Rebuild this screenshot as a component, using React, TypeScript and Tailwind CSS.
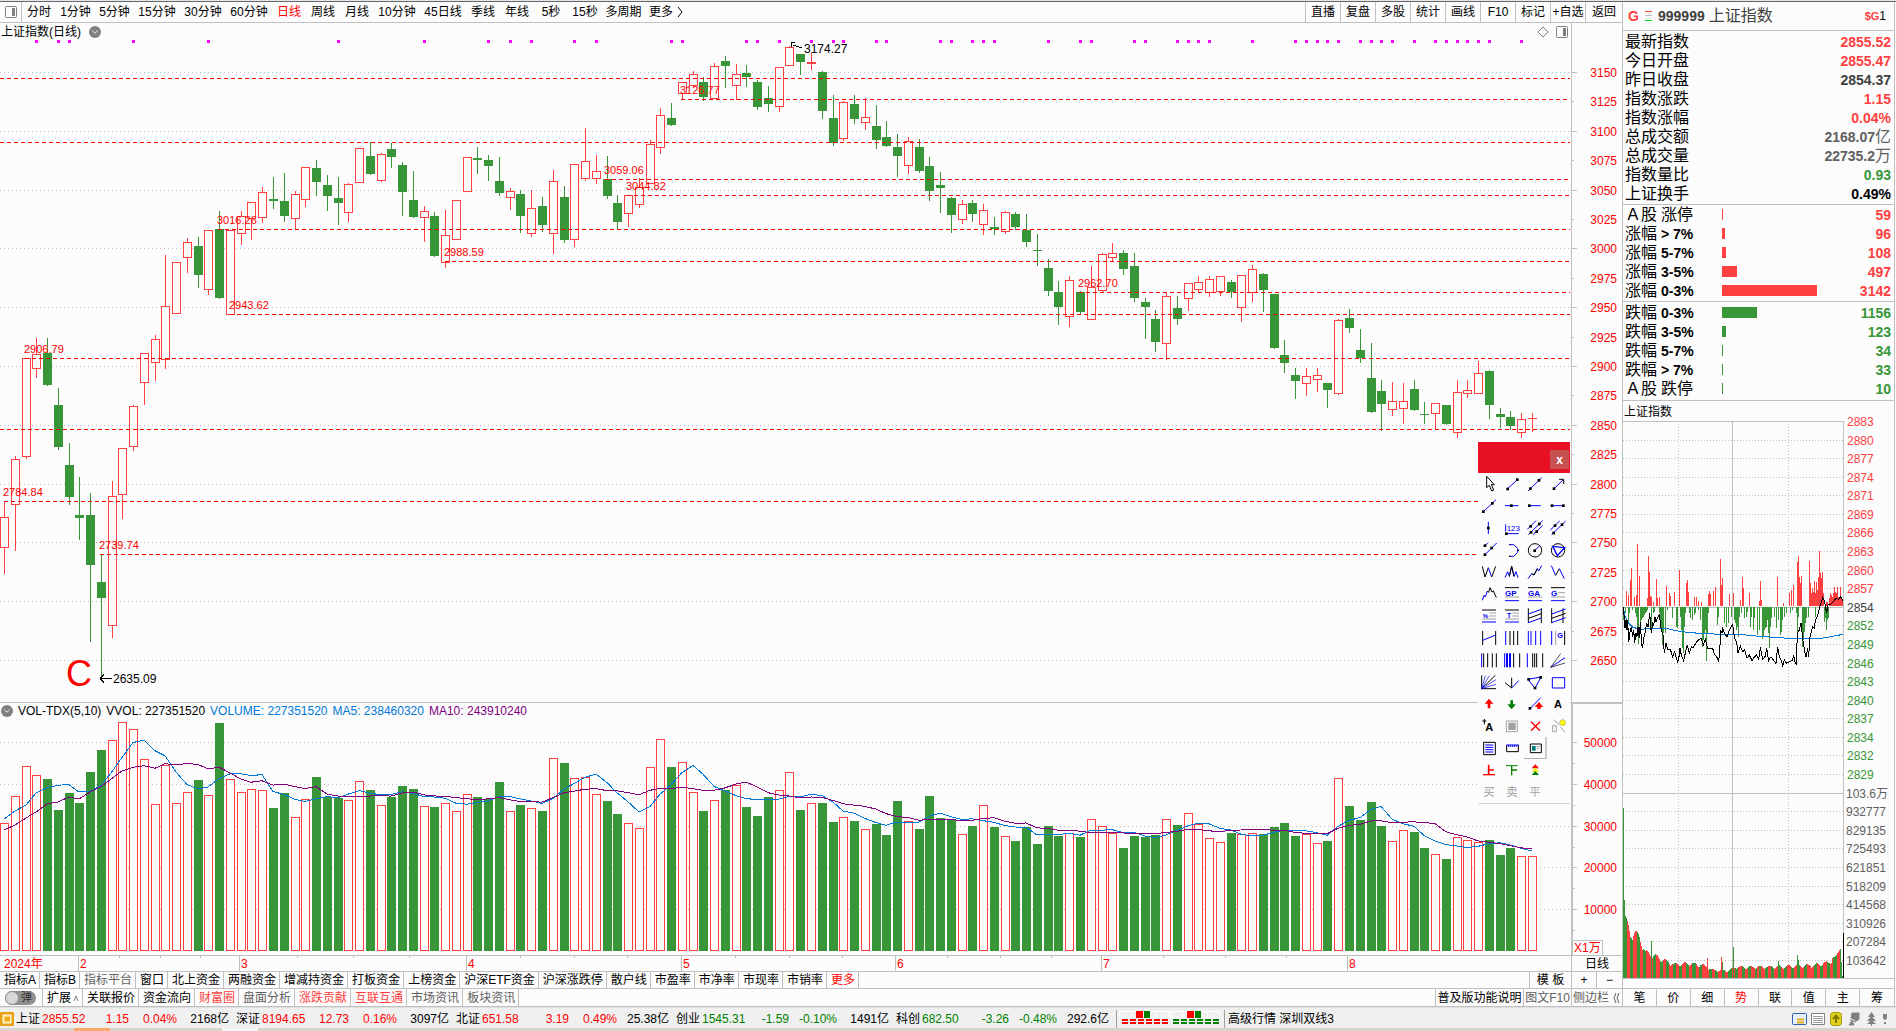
import { useState } from 'react';
import type { ReactNode } from 'react';
import clsx from 'clsx';
import { ChevronDown } from 'lucide-react';

const UP = '#ff4040';
const DOWN = '#389638';
const GRID = '#c0c0c0';
const PAPER = '#fcfcfc';

/** direction, high, body top, body bottom, low, volume top (all in chart units). */
type Bar = ['u' | 'd', number, number, number, number, number];

const BARS: Bar[] = [
  ['u', 501, 517, 547, 573, 823], ['u', 456, 459, 504, 550, 796], ['u', 358, 358, 456, 458, 766],
  ['u', 338, 354, 368, 377, 775], ['d', 338, 353, 385, 385, 779], ['d', 388, 405, 447, 449, 810],
  ['d', 443, 465, 497, 504, 793], ['d', 477, 515, 518, 539, 803], ['d', 493, 515, 565, 641, 772],
  ['d', 555, 582, 598, 677, 750], ['u', 481, 496, 625, 637, 740], ['u', 448, 448, 494, 518, 722],
  ['u', 405, 406, 446, 450, 729], ['u', 353, 353, 382, 404, 759], ['u', 335, 339, 362, 380, 804],
  ['u', 255, 306, 359, 368, 765], ['u', 262, 262, 313, 313, 803], ['u', 238, 242, 257, 272, 792],
  ['d', 237, 246, 275, 287, 780], ['u', 230, 230, 289, 294, 795], ['d', 211, 229, 298, 298, 723],
  ['u', 230, 230, 314, 314, 779], ['u', 211, 216, 233, 244, 792], ['u', 202, 202, 218, 239, 789],
  ['u', 187, 192, 217, 222, 790], ['d', 177, 199, 201, 208, 808], ['d', 173, 201, 216, 221, 793],
  ['u', 191, 194, 218, 228, 817], ['u', 167, 167, 199, 206, 799], ['d', 160, 168, 182, 195, 777],
  ['d', 175, 185, 196, 210, 797], ['d', 177, 198, 203, 224, 798], ['u', 183, 184, 212, 221, 800],
  ['u', 148, 148, 182, 182, 781], ['d', 142, 156, 174, 174, 790], ['u', 153, 154, 180, 181, 805],
  ['d', 143, 149, 157, 167, 797], ['d', 162, 165, 192, 215, 786], ['d', 171, 200, 217, 217, 789],
  ['u', 206, 211, 217, 241, 806], ['d', 212, 216, 256, 256, 807], ['u', 210, 235, 262, 267, 803],
  ['u', 200, 200, 239, 239, 811], ['u', 157, 157, 191, 191, 794], ['d', 147, 158, 160, 173, 797],
  ['d', 155, 160, 166, 180, 799], ['d', 157, 181, 193, 195, 782], ['u', 188, 191, 197, 209, 811],
  ['d', 190, 194, 216, 232, 805], ['u', 190, 208, 233, 236, 808], ['d', 197, 206, 225, 231, 811],
  ['u', 170, 181, 233, 253, 758], ['d', 186, 197, 240, 242, 763], ['u', 164, 164, 239, 246, 778],
  ['u', 128, 161, 178, 180, 777], ['u', 155, 171, 178, 183, 794], ['d', 156, 179, 196, 198, 801],
  ['d', 195, 203, 222, 229, 814], ['u', 195, 195, 213, 226, 823], ['u', 178, 187, 204, 207, 828],
  ['u', 140, 144, 183, 183, 767], ['u', 108, 115, 147, 153, 739], ['d', 103, 118, 125, 125, 767],
  ['u', 82, 82, 93, 99, 762], ['u', 71, 74, 85, 86, 792], ['d', 77, 82, 97, 100, 811],
  ['u', 63, 66, 98, 98, 800], ['d', 56, 61, 66, 87, 790], ['u', 64, 74, 85, 99, 785],
  ['d', 65, 73, 77, 86, 807], ['d', 80, 82, 107, 109, 816], ['d', 86, 98, 104, 111, 797],
  ['u', 67, 67, 106, 111, 790], ['u', 46, 47, 65, 65, 772], ['d', 54, 54, 62, 74, 810],
  ['u', 53, 62, 64, 69, 803], ['d', 71, 72, 111, 118, 803], ['d', 95, 118, 143, 145, 822],
  ['u', 101, 102, 138, 140, 817], ['d', 95, 104, 119, 123, 821], ['u', 98, 117, 122, 129, 829],
  ['d', 105, 126, 140, 148, 824], ['d', 121, 137, 146, 146, 835], ['d', 134, 147, 156, 176, 801],
  ['u', 137, 141, 165, 173, 821], ['d', 139, 147, 171, 172, 829], ['d', 157, 166, 191, 200, 796],
  ['d', 172, 185, 188, 212, 818], ['d', 197, 198, 215, 232, 820], ['u', 200, 204, 219, 223, 834],
  ['d', 200, 203, 214, 221, 826], ['u', 204, 210, 224, 234, 805], ['d', 217, 227, 229, 234, 827],
  ['u', 211, 212, 231, 233, 836], ['d', 212, 214, 227, 229, 841], ['d', 214, 230, 242, 246, 827],
  ['d', 234, 250, 251, 265, 844], ['d', 259, 268, 291, 295, 826], ['d', 281, 292, 307, 324, 836],
  ['u', 276, 280, 316, 326, 833], ['d', 291, 292, 312, 313, 837], ['u', 266, 287, 319, 319, 819],
  ['u', 253, 254, 290, 292, 826], ['u', 243, 253, 257, 260, 833], ['d', 250, 253, 269, 274, 848],
  ['d', 253, 266, 298, 301, 836], ['d', 298, 302, 307, 338, 837], ['d', 310, 319, 342, 351, 835],
  ['u', 292, 296, 343, 359, 819], ['d', 296, 308, 319, 324, 825], ['u', 283, 283, 298, 310, 813],
  ['u', 276, 282, 289, 291, 824], ['u', 276, 279, 292, 296, 838], ['u', 276, 276, 291, 295, 842],
  ['d', 280, 282, 292, 297, 833], ['u', 275, 275, 307, 321, 834], ['u', 265, 269, 292, 301, 833],
  ['d', 273, 274, 290, 311, 834], ['d', 294, 294, 348, 348, 827], ['d', 340, 355, 363, 372, 823],
  ['d', 368, 375, 381, 398, 836], ['u', 368, 376, 383, 395, 834], ['u', 368, 375, 379, 391, 843],
  ['d', 383, 383, 390, 407, 841], ['u', 319, 320, 393, 394, 778], ['d', 309, 318, 328, 332, 806],
  ['d', 329, 350, 358, 362, 820], ['d', 343, 378, 412, 412, 802], ['d', 380, 391, 404, 430, 826],
  ['u', 382, 401, 409, 415, 841], ['u', 383, 401, 408, 423, 830], ['d', 380, 389, 410, 410, 832],
  ['d', 402, 414, 415, 423, 848], ['u', 403, 403, 413, 429, 854], ['d', 405, 405, 424, 424, 859],
  ['u', 380, 392, 432, 437, 837], ['u', 380, 390, 393, 397, 840], ['u', 361, 373, 393, 393, 842],
  ['d', 370, 371, 405, 418, 840], ['d', 408, 414, 417, 427, 855], ['d', 411, 417, 426, 429, 848],
  ['u', 413, 419, 432, 437, 856], ['u', 413, 418, 419, 431, 856],
];

const barX = (i: number) => Math.round(4 + i * 10.76);

/** Bars that carry a magenta signal dot. */
const SIGNALS = [
  3, 5, 6, 12, 19, 31, 39, 45, 47, 49, 53, 55, 62, 63, 69, 70, 72, 75, 77, 78, 81, 82, 87, 88, 90, 91,
  92, 97, 100, 101, 105, 106, 109, 110, 111, 112, 116, 120, 121, 122, 123, 124, 126, 127, 128, 129,
  131, 133, 134, 135, 136, 137, 138, 141,
];

/** y, start x, label */
const LEVELS: [number, number, string?][] = [
  [78, 0], [99, 681, '3126.77'], [142, 0], [179, 605, '3059.06'], [195, 627, '3044.82'],
  [229, 218, '3016.26'], [261, 445, '2988.59'], [292, 1079, '2962.70'], [314, 230, '2943.62'],
  [358, 25, '2906.79'], [429, 0], [501, 4, '2784.84'], [554, 100, '2739.74'],
];

function Candle({ bar, i }: { bar: Bar; i: number }) {
  const [dir, high, top, bottom, low] = bar;
  const x = barX(i);
  const color = dir === 'u' ? UP : DOWN;
  const solid = dir === 'd' || bottom - top < 3;
  return (
    <g>
      <rect x={x} y={high} width={1} height={low - high + 1} fill={color} />
      {solid ? (
        <rect x={x - 4} y={top} width={9} height={Math.max(bottom - top, 1)} fill={color} />
      ) : (
        <rect x={x - 3.5} y={top + 0.5} width={8} height={bottom - top} fill={PAPER} stroke={color} />
      )}
    </g>
  );
}

function PriceChart() {
  const axis = Array.from({ length: 21 }, (_, i) => ({
    value: 3150 - i * 25,
    y: Math.round(72 + i * 29.4),
    major: i % 2 === 0,
  }));
  return (
    <svg viewBox="0 40 1622 662" className="block h-auto w-full" shapeRendering="crispEdges">
      {axis.map((a) => (
        <g key={a.value}>
          {a.major && (
            <line x1={0} x2={1570} y1={a.y + 0.5} y2={a.y + 0.5} stroke={GRID} strokeDasharray="1 3" />
          )}
          <rect x={1571} y={a.y} width={a.major ? 6 : 3} height={1} fill={GRID} />
          <text x={1617} y={a.y + 5} textAnchor="end" fontSize={12} fill="#f00">
            {a.value}
          </text>
        </g>
      ))}
      <rect x={1571} y={40} width={1} height={662} fill={GRID} />
      {SIGNALS.map((i) => (
        <rect key={i} x={barX(i) - 1} y={40} width={3} height={3} fill="#f0f" />
      ))}
      {BARS.map((bar, i) => (
        <Candle key={i} bar={bar} i={i} />
      ))}
      {LEVELS.map(([y, x, label]) => (
        <g key={y}>
          <line x1={x} x2={1570} y1={y + 0.5} y2={y + 0.5} stroke="#f00" strokeDasharray="4 3" />
          {label && (
            <text x={x - 1} y={y - 5} fontSize={11} fill="#f00">
              {label}
            </text>
          )}
        </g>
      ))}
      <path d="M791 47V42.500h4M793 45.500h3M796 46.500h3M799 47.500h3" fill="none" stroke="#000" />
      <text x={804} y={53} fontSize={12}>
        3174.27
      </text>
      <path d="M100 678.5h12M100 678.5l4-4M100 678.5l4 4" fill="none" stroke="#000" />
      <text x={113} y={683} fontSize={12}>
        2635.09
      </text>
      <text x={66} y={686} fontSize={36} fill="#f00">
        C
      </text>
    </svg>
  );
}

/** Rolling mean of the volume tops; `lead` fills the bars before the window is full. */
function movingAverage(span: number, lead: number[]) {
  return BARS.map((_, i) => {
    const y =
      i < lead.length
        ? lead[i]
        : BARS.slice(i - span + 1, i + 1).reduce((sum, b) => sum + b[5], 0) / span;
    return `${barX(i)},${y}`;
  }).join(' ');
}

function VolumeChart() {
  const ma5 = movingAverage(5, [819, 811, 805, 793]);
  const ma10 = movingAverage(10, [830, 825, 818, 812, 804, 802, 797, 799, 792]);
  return (
    <svg viewBox="0 719 1622 236" className="block h-auto w-full" shapeRendering="crispEdges">
      {[50000, 40000, 30000, 20000, 10000].map((v, i) => {
        const y = Math.round(742 + i * 41.8);
        return (
          <g key={v}>
            <line x1={0} x2={1570} y1={y + 0.5} y2={y + 0.5} stroke={GRID} strokeDasharray="1 3" />
            <rect x={1573} y={y} width={4} height={1} fill={GRID} />
            <rect x={1573} y={y + 21} width={2} height={1} fill={GRID} />
            <text x={1617} y={y + 5} textAnchor="end" fontSize={12} fill="#f00">
              {v}
            </text>
          </g>
        );
      })}
      {BARS.map(([dir, , , , , top], i) =>
        dir === 'd' ? (
          <rect key={i} x={barX(i) - 4} y={top} width={9} height={951 - top} fill={DOWN} />
        ) : (
          <rect key={i} x={barX(i) - 3.5} y={top + 0.5} width={8} height={950 - top} fill={PAPER} stroke={UP} />
        ),
      )}
      <polyline points={ma5} fill="none" stroke="#0078d7" />
      <polyline points={ma10} fill="none" stroke="#800080" />
      <rect x={1571} y={719} width={2} height={236} fill={GRID} />
      <rect x={1573} y={940} width={29} height={1} fill={GRID} />
      <rect x={1602} y={940} width={1} height={15} fill={GRID} />
      <text x={1574} y={952} fontSize={12} fill="#f00">
        X1万
      </text>
    </svg>
  );
}

const MONTHS: [number, string][] = [
  [79, '2'], [240, '3'], [467, '4'], [682, '5'], [896, '6'], [1102, '7'], [1348, '8'],
];
const WEEKS = [119, 160, 200, 297, 353, 409, 520, 574, 627, 735, 789, 842, 947, 1000, 1051, 1163, 1225, 1286];

function DateAxis() {
  return (
    <svg viewBox="0 0 1571 15" className="block h-auto min-w-0 flex-1" shapeRendering="crispEdges">
      <text x={4} y={12} fontSize={12} fill="#f00">
        2024年
      </text>
      {MONTHS.map(([x, m]) => (
        <g key={m}>
          <rect x={x - 1} y={0} width={1} height={15} fill={GRID} />
          <text x={x + 1} y={12} fontSize={12} fill="#f00">
            {m}
          </text>
        </g>
      ))}
      {WEEKS.map((x) => (
        <rect key={x} x={x} y={0} width={1} height={2} fill={GRID} />
      ))}
    </svg>
  );
}

/* ---- drawing tools palette; every glyph sits on a 69 x 66 grid ---- */

const K = '#000';
const B = '#00f';
const G = '#a0a0a0';

function Line({ d, c = B, w = 3 }: { d: string; c?: string; w?: number }) {
  return <path d={d} fill="none" stroke={c} strokeWidth={w} />;
}

function Dots({ at }: { at: [number, number][] }) {
  return (
    <>
      {at.map(([x, y]) => (
        <rect key={`${x}-${y}`} x={x - 4} y={y - 4} width={8} height={8} fill={K} />
      ))}
    </>
  );
}

function Glyph({ x, y, size = 24, c = B, bold, children }: {
  x: number;
  y: number;
  size?: number;
  c?: string;
  bold?: boolean;
  children: string;
}) {
  return (
    <text x={x} y={y} fontSize={size} fill={c} fontWeight={bold ? 700 : 400}>
      {children}
    </text>
  );
}

function Banded({ label }: { label: string }) {
  return (
    <>
      <Line d="M12 14H54" c={K} />
      <Glyph x={12} y={38} size={24} bold>{label}</Glyph>
      {label.length === 1 && <Line d="M34 29H54" c={G} />}
      <Line d="M12 42H54" c={G} />
      <Line d="M12 53H54" />
    </>
  );
}

const TOOLS: [string, ReactNode][] = [
  ['选择', <path d="M26 10V44L34 37L41 54L47 51L40 35H49Z" fill="#fff" stroke={K} strokeWidth={3} />],
  ['线段', <><Line d="M18 49L50 19" /><Dots at={[[20, 48], [49, 20]]} /></>],
  ['直线', <><Line d="M12 54L53 14" /><Dots at={[[19, 47], [45, 22]]} /></>],
  ['箭头', <><Line d="M19 49L49 20" /><Line d="M36 19H50V33" c={K} /><Dots at={[[21, 47]]} /></>],
  ['射线', <><Line d="M12 54L54 14" /><Dots at={[[16, 50], [43, 25]]} /></>],
  ['水平直线', <><Line d="M12 32H52" /><Dots at={[[31, 32]]} /></>],
  ['水平射线', <><Line d="M12 32H50" /><Dots at={[[16, 32]]} /></>],
  ['水平线段', <><Line d="M12 32H53" /><Dots at={[[15, 32], [49, 32]]} /></>],
  ['垂直线', <><Line d="M31 14V51" /><Dots at={[[31, 33]]} /></>],
  ['价格标注', <><Line d="M14 22V43" /><Glyph x={17} y={43} size={24}>123</Glyph><Line d="M16 50H53" /><Dots at={[[16, 50]]} /></>],
  ['平行线', <><Line d="M10 37L36 11M13 53L56 11M27 53L56 26" /><Dots at={[[20, 28], [46, 21], [21, 46], [38, 44]]} /></>],
  ['平行通道', <><Line d="M10 39L38 12M14 53L56 12" /><Dots at={[[24, 26], [45, 23], [20, 48]]} /></>],
  ['平行射线', <><Line d="M19 22L30 11M19 49L56 12" /><Dots at={[[21, 20], [21, 47], [41, 27]]} /></>],
  ['圆弧', <><Line d="M25 17H38L50 28V40L38 52H24" /><Line d="M25 17h3M50 34h4M24 52h4" c={K} w={4} /></>],
  ['圆', <><circle cx={33} cy={34} r={20} fill="none" stroke={K} strokeWidth={3} /><Line d="M33 34L47 20" /><Dots at={[[32, 35]]} /></>],
  ['外接圆', <><circle cx={33} cy={34} r={20} fill="none" stroke={K} strokeWidth={3} /><Line d="M17 22L53 26L31 50Z" w={4} /></>],
  ['W底', <><Line d="M13 16L21 48L31 20" c={K} /><Line d="M31 20L41 48" /><Line d="M41 48L53 16" c={K} /></>],
  ['头肩顶', <><Line d="M12 50L20 32L25 46L32 16L39 46L45 32L51 50" /><Line d="M25 46L32 16L39 46" c={K} /></>],
  ['上升浪', <><Line d="M12 53L23 38L30 42L40 23L44 30L53 14" /><Line d="M23 38L30 42L40 23" c={K} /></>],
  ['下降浪', <><Line d="M13 14L26 43" /><Line d="M26 43L37 23" c={K} /><Line d="M37 23L52 53" /></>],
  ['八浪线', <><Line d="M13 52L18 37L22 42L28 24" /><Line d="M28 24L32 28L36 14L42 27L46 24L55 44" c={K} /></>],
  ['黄金价位', <Banded label="GP" />],
  ['黄金目标', <Banded label="GA" />],
  ['黄金分割', <Banded label="G" />],
  ['百分比线', <><Line d="M12 15H54" c={K} /><Glyph x={14} y={38} size={18} bold>%</Glyph><Line d="M34 24H54M34 33H54M12 42H54" c={G} /><Line d="M12 51H54" /></>],
  ['波段线', <><Line d="M12 15H54" c={K} /><Glyph x={18} y={38} size={20} bold>T</Glyph><Line d="M34 24H54M34 33H54M12 42H54" c={G} /><Line d="M12 51H54" /></>],
  ['线性回归带', <><Line d="M13 10V54M52 10V54" c={K} /><Line d="M13 27L52 13M13 53L52 39" /><Line d="M13 40L52 26" c={K} /></>],
  ['延长回归带', <><Line d="M14 10V54M48 10V54" c={K} /><Line d="M14 27L56 12M14 53L56 38" /><Line d="M14 40L56 25" c={K} /></>],
  ['回归线', <><Line d="M14 12V54M53 12V54" c={K} /><Line d="M14 40L53 24" /></>],
  ['周期线', <><Line d="M14 12V54" /><Line d="M27 12V54M38 12V54M50 12V54" c={K} /></>],
  ['费氏周期', <Line d="M13 12V54M21 12V54M35 12V54M50 12V54" />],
  ['对称周期', <><Line d="M14 12V54" /><Line d="M26 12V54" c={G} /><Glyph x={31} y={34} size={22} bold>G</Glyph><Line d="M53 12V54" c={K} /></>],
  ['等距线', <><Line d="M11 13V55" /><Line d="M17 13V55M29 13V55M43 13V55M55 13V55" c={K} /></>],
  ['密集线', <><Line d="M11 13V55" /><Line d="M18 13V55M27 13V55" w={6} /><Line d="M38 13V55M56 13V55" c={K} /></>],
  ['组合线', <><Line d="M10 13V55" /><Line d="M26 13V55M32 13V55M38 13V55M56 13V55" c={K} /></>],
  ['阻速线', <><Line d="M11 55L54 26" /><Line d="M11 55L41 14M11 55L54 42" c={K} w={2} /></>],
  ['江恩角度', <><Line d="M11 13V53H54M11 53L52 13" c={K} /><Line d="M11 53L22 14M11 53L34 14M11 53L54 26M11 53L54 40" w={2} /></>],
  ['矩形角', <><Line d="M12 35L32 51V20" c={K} /><Line d="M32 51L53 29" /></>],
  ['三角形', <><Line d="M12 25L51 18L33 52Z" /><Dots at={[[14, 25], [50, 19], [33, 51]]} /></>],
  ['矩形', <Line d="M16 20H53V51H16Z" />],
  ['涨标记', <path d="M33 17L46 32H37V46H29V32H20Z" fill="#f00" />],
  ['跌标记', <path d="M32 49L45 34H36V22H28V34H19Z" fill="green" />],
  ['线标记', <><Line d="M15 50L50 14" /><Dots at={[[18, 46]]} /><path d="M45 27L58 42H50V48H40V42H32Z" fill="#f00" /></>],
  ['文字', <Glyph x={21} y={46} size={33} c={K} bold>A</Glyph>],
  ['文字注释', <><Line d="M13 18H25M19 12V28" c={K} /><Glyph x={22} y={48} size={33} c={K} bold>A</Glyph></>],
  ['全部隐藏', <><Line d="M16 18H49V50H16Z" c={G} /><rect x={22} y={23} width={22} height={22} fill={G} /></>],
  ['删除', <Line d="M21 20L48 47M48 20L21 47" c="#f00" w={4} />],
  ['属性', <><Line d="M17 32H28V50H17ZM20 14L38 30M40 36L54 52" c={G} /><circle cx={47} cy={23} r={9} fill="#ff0" stroke={G} strokeWidth={2} /></>],
  ['画线管理', <><Line d="M17 16H52V53H17Z" c={K} /><Line d="M22 24H46M22 31H46M22 38H46M22 45H46" /></>],
  ['标尺', <><Line d="M17 24V44H52V24" c={K} /><Line d="M16 24H54M22 24V30M28 24V30M34 24V30M40 24V30M46 24V30" /></>],
  ['截图', <><Line d="M19 21H52V47H19Z" c={K} /><rect x={24} y={27} width={11} height={14} fill="#008080" /><Line d="M38 29H48M38 35H44" c={G} /><Line d="M66 0V65H0" c={G} /></>],
  ['__empty1', null],
  ['上', <><Line d="M32 17V47M32 33H48" c="#f00" w={5} /><Line d="M15 47H51" c="#f00" w={4} /></>],
  ['下', <><Line d="M15 20H50" c="green" w={3} /><Line d="M32 20V49M32 33H48" c="green" w={4} /></>],
  ['信号', <><path d="M34 16L45 28H23Z" fill="#f00" /><path d="M34 26L45 38H23Z" fill="#ee0" /><path d="M34 36L45 48H23Z" fill="green" /></>],
  ['__empty2', null],
  ['买', <Glyph x={16} y={45} size={34} c={G}>买</Glyph>],
  ['卖', <Glyph x={16} y={45} size={34} c={G}>卖</Glyph>],
  ['平', <Glyph x={16} y={45} size={34} c={G}>平</Glyph>],
];

function DrawingPalette({ onClose }: { onClose: () => void }) {
  return (
    <div className="absolute right-[52px] top-[419px] w-[92px] border-b border-gray-300 bg-[#fcfcfc]">
      <div className="flex h-[31px] items-center justify-end bg-[#e81123] pr-px pt-1">
        <button
          type="button"
          aria-label="关闭"
          onClick={onClose}
          className="flex size-[19px] items-center justify-center bg-[#c75050] text-xs font-bold leading-none text-white"
        >
          x
        </button>
      </div>
      <div className="grid grid-cols-4">
        {TOOLS.map(([name, art]) =>
          art ? (
            <button key={name} type="button" aria-label={name} className="h-[22px] w-[23px]">
              <svg viewBox="0 0 69 66" className="block h-[22px] w-[23px]">
                {art}
              </svg>
            </button>
          ) : (
            <span key={name} />
          ),
        )}
      </div>
    </div>
  );
}

/* ---- toolbars ---- */

const PERIODS: [string, string][] = [
  ['分时', 'w-[34px]'], ['1分钟', 'w-[39px]'], ['5分钟', 'w-[39px]'], ['15分钟', 'w-[46px]'],
  ['30分钟', 'w-[46px]'], ['60分钟', 'w-[46px]'], ['日线', 'w-[34px]'], ['周线', 'w-[34px]'],
  ['月线', 'w-[34px]'], ['10分钟', 'w-[46px]'], ['45日线', 'w-[46px]'], ['季线', 'w-[34px]'],
  ['年线', 'w-[34px]'], ['5秒', 'w-[34px]'], ['15秒', 'w-[34px]'], ['多周期', 'w-[43px]'],
];
const ACTIONS = ['直播', '复盘', '多股', '统计', '画线', 'F10', '标记', '+自选'];

function PaneIcon() {
  return (
    <svg viewBox="0 0 12 12" className="size-3 shrink-0">
      <rect x={0.5} y={0.5} width={11} height={11} rx={1} fill="none" stroke="#808080" />
      <rect x={7} y={2} width={3} height={8} fill="#808080" />
    </svg>
  );
}

function TopBar() {
  const [period, setPeriod] = useState('日线');
  return (
    <div className="flex h-[21px] items-stretch border-b border-[#c0c0c0]">
      <button type="button" aria-label="侧栏" className="flex w-[22px] items-center justify-center border-r border-[#c0c0c0]">
        <PaneIcon />
      </button>
      {PERIODS.map(([name, width]) => (
        <button
          key={name}
          type="button"
          onClick={() => setPeriod(name)}
          className={clsx('shrink-0 whitespace-nowrap text-center', width, period === name && 'text-[#f00]')}
        >
          {name}
        </button>
      ))}
      <button type="button" className="flex items-center gap-1 whitespace-nowrap pl-1">
        更多
        <svg viewBox="0 0 6 10" className="h-2.5 w-1.5">
          <path d="M1 0L5 5L1 10" fill="none" stroke="#000" />
        </svg>
      </button>
      <span className="flex-1" />
      {ACTIONS.map((name) => (
        <button key={name} type="button" className="w-[35px] shrink-0 whitespace-nowrap border-l border-[#c0c0c0] text-center">
          {name}
        </button>
      ))}
      <button type="button" className="w-[37px] shrink-0 border-l border-[#c0c0c0]">
        返回
      </button>
    </div>
  );
}

function Bullet() {
  return (
    <span className="flex size-3 shrink-0 items-center justify-center rounded-full bg-[#808080] text-white">
      <ChevronDown size={10} />
    </span>
  );
}

const INDICATORS = [
  '指标A', '指标B', '指标平台', '窗口', '北上资金', '两融资金', '增减持资金', '打板资金', '上榜资金',
  '沪深ETF资金', '沪深涨跌停', '散户线', '市盈率', '市净率', '市现率', '市销率', '更多',
];
const LINKS: [string, string][] = [
  ['关联报价', ''], ['资金流向', ''], ['财富圈', 'text-[#ff4040]'], ['盘面分析', 'text-[#606060]'],
  ['涨跌贡献', 'text-[#ff4040]'], ['互联互通', 'text-[#ff4040]'], ['市场资讯', 'text-[#606060]'],
  ['板块资讯', 'text-[#606060]'],
];
const CELL = 'shrink-0 whitespace-nowrap border-r border-[#c0c0c0] pl-1 pr-[3px] text-center';

function BottomBars() {
  return (
    <>
      <div className="flex h-[17px] border-t border-[#c0c0c0] leading-4">
        {INDICATORS.map((name) => (
          <button
            key={name}
            type="button"
            className={clsx(CELL, name === '更多' && 'text-[#f00]', name === '指标平台' && 'text-[#606060]')}
          >
            {name}
          </button>
        ))}
        <span className="flex-1" />
        <button type="button" className="w-[42px] border-l border-[#c0c0c0]">模 板</button>
        <button type="button" className="w-[25px] border-l border-[#c0c0c0]">+</button>
        <button type="button" className="w-[26px] border-l border-[#c0c0c0]">−</button>
      </div>
      <div className="flex h-[18px] border-t border-[#c0c0c0] leading-4">
        <label className="flex w-[43px] items-center border-r border-[#c0c0c0] pl-[5px]">
          <input type="checkbox" className="peer sr-only" />
          <span className="flex h-[14px] w-[31px] items-center rounded-full bg-[#909090] text-[11px] leading-none text-[#333]">
            <span className="mr-0.5 size-3.5 rounded-full border border-[#909090] bg-[#d8d8d8]" />弹
          </span>
        </label>
        <button type="button" className={clsx(CELL, 'flex items-center gap-0.5')}>
          扩展
          <svg viewBox="0 0 6 6" className="size-1.5">
            <path d="M1 6L3 1L5 6" fill="none" stroke="#808080" />
          </svg>
        </button>
        {LINKS.map(([name, tone]) => (
          <button key={name} type="button" className={clsx(CELL, tone)}>
            {name}
          </button>
        ))}
        <span className="flex-1" />
        <button type="button" className="w-[88px] whitespace-nowrap border-l border-[#c0c0c0]">普及版功能说明</button>
        <button type="button" className="w-12 whitespace-nowrap border-l border-[#c0c0c0] text-[#606060]">图文F10</button>
        <button type="button" className="flex w-[51px] items-center gap-1 whitespace-nowrap border-l border-[#c0c0c0] pl-px text-[#606060]">
          侧边栏
          <svg viewBox="0 0 7 10" className="h-2.5 w-[7px]">
            <path d="M3 0L1 5L3 10M6 0L4 5L6 10" fill="none" stroke="#606060" />
          </svg>
        </button>
      </div>
    </>
  );
}

/* ---- quote panel ---- */

const QUOTES: [string, string, string, string?][] = [
  ['最新指数', '2855.52', 'text-[#ff4040]'],
  ['今日开盘', '2855.47', 'text-[#ff4040]'],
  ['昨日收盘', '2854.37', 'text-[#404040]'],
  ['指数涨跌', '1.15', 'text-[#ff4040]'],
  ['指数涨幅', '0.04%', 'text-[#ff4040]'],
  ['总成交额', '2168.07', 'text-[#606060]', '亿'],
  ['总成交量', '22735.2', 'text-[#606060]', '万'],
  ['指数量比', '0.93', 'text-[#389638]'],
  ['上证换手', '0.49%', 'text-black'],
];

const GAINERS: [string, string, number, number][] = [
  ['Ａ股', '涨停', 59, 1], ['涨幅', '> 7%', 96, 3], ['涨幅', '5-7%', 108, 4], ['涨幅', '3-5%', 497, 15], ['涨幅', '0-3%', 3142, 95],
];
const LOSERS: [string, string, number, number][] = [
  ['跌幅', '0-3%', 1156, 35], ['跌幅', '3-5%', 123, 4], ['跌幅', '5-7%', 34, 1], ['跌幅', '> 7%', 33, 1], ['Ａ股', '跌停', 10, 1],
];

function Breadth({ rows, down }: { rows: [string, string, number, number][]; down?: boolean }) {
  return (
    <table className="w-full border-separate border-spacing-0 leading-none">
      <tbody>
        {rows.map(([kind, range, count, width]) => (
          <tr key={kind + range} className="h-[19px]">
            <th scope="row" className="w-[99px] whitespace-nowrap p-0 pl-0.5 text-left text-base font-normal leading-none">
              {kind}
              <span className={clsx('ml-1', /\d/.test(range) && 'text-sm font-bold leading-none')}>{range}</span>
            </th>
            <td className="p-0">
              <div className={clsx('h-[11px]', down ? 'bg-[#389638]' : 'bg-[#ff4040]')} style={{ width }} />
            </td>
            <td className={clsx('p-0 pr-[3px] text-right text-sm font-bold leading-none', down ? 'text-[#389638]' : 'text-[#ff4040]')}>
              {count}
            </td>
          </tr>
        ))}
      </tbody>
    </table>
  );
}

/* Intraday samples are kept at a third of a pixel. */
const tx = (v: number) => 1616 + v / 3;
const ty = (v: number) => 400 + v / 3;
const trace = (pts: number[]) => {
  const out: string[] = [];
  for (let i = 0; i < pts.length; i += 2) out.push(`${tx(pts[i])},${ty(pts[i + 1])}`);
  return out.join(' ');
};

const TICKS = [
  22, 620, 27, 685, 30, 660, 33, 690, 35, 660, 38, 727, 42, 695, 46, 680, 50, 712, 53, 690, 56, 728, 60, 700,
  63, 710, 66, 680, 70, 715, 73, 665, 76, 720, 79, 745, 84, 710, 88, 695, 92, 668, 96, 680, 101, 640, 106, 700,
  110, 670, 113, 675, 117, 650, 120, 665, 124, 655, 130, 645, 136, 690, 141, 705, 145, 760, 150, 730, 156, 750,
  163, 748, 170, 770, 176, 755, 180, 770, 185, 788, 190, 765, 192, 745, 196, 765, 203, 782, 210, 750, 214, 735,
  220, 760, 226, 740, 232, 742, 240, 728, 248, 720, 256, 715, 262, 735, 268, 718, 275, 745, 290, 745, 295, 762,
  303, 772, 308, 783, 311, 760, 314, 690, 318, 700, 320, 682, 325, 700, 333, 710, 340, 690, 345, 680, 350, 675,
  356, 715, 362, 728, 366, 760, 373, 738, 380, 755, 386, 750, 393, 775, 400, 765, 408, 782, 416, 770, 422, 765,
  428, 778, 433, 742, 440, 778, 447, 770, 452, 745, 458, 782, 465, 770, 472, 780, 480, 790, 485, 740, 490, 770,
  497, 785, 500, 800, 505, 780, 512, 790, 520, 785, 530, 780, 533, 765, 536, 785, 541, 795, 544, 700, 550, 690,
  555, 670, 562, 730, 567, 760, 570, 770, 575, 745, 578, 770, 582, 710, 590, 680, 595, 685, 598, 660, 604, 650,
  610, 625, 615, 610, 620, 592, 626, 605, 632, 640, 636, 615, 645, 612, 652, 605, 660, 595, 668, 598, 674, 590,
  680, 602,
];
const AVERAGE = [
  22, 620, 26, 645, 38, 670, 50, 682, 75, 688, 110, 684, 145, 684, 195, 695, 260, 701, 390, 705, 430, 709,
  520, 715, 615, 715, 650, 709, 681, 703,
];
const RISES = [
  31, 573, 38, 585, 43, 540, 46, 504, 55, 590, 61, 585, 64, 432, 70, 528, 94, 594, 97, 468, 100, 515, 103, 588,
  107, 590, 113, 605, 121, 537, 124, 593, 130, 590, 152, 558, 160, 580, 163, 588, 175, 575, 190, 510, 211, 550,
  214, 540, 217, 575, 235, 590, 241, 590, 248, 603, 255, 605, 277, 582, 280, 573, 284, 582, 292, 573, 298, 560,
  313, 477, 317, 555, 320, 533, 341, 583, 352, 578, 374, 600, 380, 530, 383, 565, 400, 580, 431, 603, 433, 543,
  436, 600, 484, 530, 502, 608, 520, 580, 526, 570, 532, 555, 545, 485, 548, 468, 551, 530, 554, 550, 557, 528,
  581, 483, 584, 550, 587, 580, 590, 563, 593, 575, 596, 543, 599, 580, 602, 545, 605, 570, 608, 530, 611, 453,
  614, 520, 617, 533, 620, 516, 623, 580, 632, 605, 635, 605, 640, 595, 644, 580, 647, 585, 650, 590, 653, 580,
  656, 560, 659, 575, 662, 580, 665, 560, 668, 590, 671, 595, 674, 560, 677, 590, 680, 600,
];
const FALLS = [
  23, 660, 29, 640, 38, 670, 41, 640, 50, 630, 58, 640, 61, 650, 64, 700, 68, 732, 73, 690, 76, 660, 79, 655,
  82, 650, 85, 645, 88, 640, 91, 635, 94, 630, 106, 690, 112, 640, 115, 635, 130, 640, 134, 680, 137, 690,
  140, 735, 143, 700, 149, 698, 155, 630, 170, 655, 181, 680, 184, 685, 193, 650, 196, 690, 199, 745, 202, 758,
  205, 680, 208, 640, 220, 640, 223, 655, 229, 660, 235, 645, 238, 640, 247, 630, 253, 660, 259, 740, 262, 720,
  265, 700, 268, 690, 271, 783, 274, 700, 277, 640, 305, 675, 308, 650, 325, 670, 331, 680, 337, 670, 346, 650,
  355, 660, 358, 670, 361, 690, 364, 680, 367, 712, 370, 650, 376, 640, 385, 655, 390, 650, 393, 635, 403, 680,
  406, 650, 412, 690, 415, 655, 424, 705, 430, 690, 439, 717, 442, 710, 445, 690, 448, 685, 451, 680, 454, 660,
  457, 700, 460, 745, 463, 680, 466, 655, 475, 650, 481, 685, 487, 660, 493, 705, 496, 695, 499, 660, 505, 650,
  511, 640, 523, 640, 530, 630, 541, 640, 544, 725, 547, 650, 560, 740, 563, 720, 566, 695, 569, 670, 572, 655,
  577, 650, 598, 650, 625, 665, 628, 655, 631, 690, 634, 660, 638, 655,
];

/** Envelope of the minute volumes: offset, height. */
const ENVELOPE: [number, number][] = [
  [0, 170], [1, 78], [2, 62], [4, 57], [7, 44], [10, 54], [14, 46], [19, 38], [22, 28], [28, 26], [40, 20],
  [50, 15], [66, 16], [80, 14], [88, 9], [104, 8], [112, 12], [140, 12], [165, 13], [190, 14], [205, 17],
  [212, 22], [217, 29], [219, 2],
];
const SPIKES: Record<number, number> = { 28: 37, 84: 20, 98: 21, 99: 16, 110: 31, 155: 17, 174: 23, 175: 18 };

function minuteVolume(x: number) {
  if (SPIKES[x]) return SPIKES[x];
  const k = Math.max(1, ENVELOPE.findIndex(([ex]) => ex >= x));
  const [x0, h0] = ENVELOPE[k - 1];
  const [x1, h1] = ENVELOPE[k];
  const base = h0 + ((h1 - h0) * (x - x0)) / (x1 - x0);
  return x < 4 || x > 208 ? base : base * (0.72 + 0.28 * Math.abs(Math.sin(x * 12.9)));
}

function pairs(list: number[]) {
  return list.filter((_, i) => i % 2 === 0).map((x, i) => [x, list[i * 2 + 1]]);
}

const PRICE_SCALE = [
  2883, 2880, 2877, 2874, 2871, 2869, 2866, 2863, 2860, 2857, 2854, 2852, 2849, 2846, 2843, 2840, 2837, 2834,
  2832, 2829,
];
const VOLUME_SCALE = ['103.6万', '932777', '829135', '725493', '621851', '518209', '414568', '310926', '207284', '103642'];

function IntradayChart() {
  const labels = [...PRICE_SCALE.map(String), ...VOLUME_SCALE];
  return (
    <svg viewBox="1623 411 271 568" className="block h-auto w-full" shapeRendering="crispEdges">
      {labels.map((label, i) => {
        const y = Math.round(421 + i * 18.58);
        const solid = i === 0 || i === 10 || i === 20;
        const color = i < 10 ? UP : i === 10 ? '#404040' : i < 20 ? DOWN : '#606060';
        return (
          <g key={label}>
            <line
              x1={1623}
              x2={1843}
              y1={y + 0.5}
              y2={y + 0.5}
              stroke={GRID}
              strokeDasharray={solid ? undefined : '1 2'}
            />
            <text x={i < 20 ? 1847 : 1846} y={y + 5} fontSize={12} fill={color}>
              {label}
            </text>
          </g>
        );
      })}
      <line x1={1678.5} x2={1678.5} y1={421} y2={978} stroke={GRID} strokeDasharray="1 2" />
      <line x1={1732.5} x2={1732.5} y1={421} y2={978} stroke={GRID} />
      <line x1={1788.5} x2={1788.5} y1={421} y2={978} stroke={GRID} strokeDasharray="1 2" />
      <line x1={1843.5} x2={1843.5} y1={421} y2={978} stroke={GRID} />
      {pairs(RISES).map(([x, y]) => (
        <rect key={x} x={Math.floor(tx(x))} y={Math.round(ty(y))} width={1} height={606 - Math.round(ty(y))} fill={UP} />
      ))}
      {pairs(FALLS).map(([x, y]) => (
        <rect key={x} x={Math.floor(tx(x))} y={607} width={1} height={Math.round(ty(y)) - 607} fill={DOWN} />
      ))}
      <polyline points={trace(AVERAGE)} fill="none" stroke="#0078d7" />
      <polyline points={trace(TICKS)} fill="none" stroke="#000" />
      {Array.from({ length: 220 }, (_, x) => {
        const h = Math.round(minuteVolume(x));
        const green = x < 3 || x === 28 || x === 110 || Math.sin(x * 7.3) + Math.sin(x * 0.9) > 0.1;
        return <rect key={x} x={1623 + x} y={978 - h} width={1} height={h} fill={green ? DOWN : UP} />;
      })}
      <rect x={1843} y={933} width={1} height={45} fill="#000" />
      <rect x={1623} y={978} width={271} height={1} fill={GRID} />
    </svg>
  );
}

function QuotePanel() {
  const [tab, setTab] = useState('势');
  return (
    <aside className="mr-px flex w-[273px] shrink-0 flex-col border-x border-[#c0c0c0]">
      <header className="flex h-[29px] items-center border-b border-[#c0c0c0] pl-[5px] pr-2 leading-none">
        <span className="w-[17px] text-sm font-bold text-[#ff4040]">G</span>
        <svg viewBox="0 0 7 10" className="mr-1.5 h-2.5 w-[7px]" shapeRendering="crispEdges">
          <rect width={7} height={1} fill="#ff4040" />
          <rect y={4} width={7} height={1} fill={GRID} />
          <rect y={9} width={7} height={1} fill="#00e000" />
        </svg>
        <span className="text-sm font-bold text-[#404040]">999999</span>
        <h1 className="ml-1 flex-1 text-base leading-none text-[#404040]">上证指数</h1>
        <span className="text-[11px] font-bold text-[#ff4040]">$G</span>
        <span className="text-xs leading-none">1</span>
      </header>
      <div className="border-b border-[#c0c0c0] py-px">
        <table className="w-full border-separate border-spacing-0">
          <tbody>
            {QUOTES.map(([name, value, tone, unit]) => (
              <tr key={name} className="h-[19px]">
                <th scope="row" className="p-0 pl-0.5 text-left text-base font-normal leading-none">
                  {name}
                </th>
                <td className={clsx('p-0 pr-[3px] text-right text-sm font-bold leading-none', tone)}>
                  {value}
                  {unit && <span className="text-base font-normal leading-none">{unit}</span>}
                </td>
              </tr>
            ))}
          </tbody>
        </table>
      </div>
      <div className="border-b border-[#c0c0c0] pb-px">
        <Breadth rows={GAINERS} />
      </div>
      <div className="border-b border-[#c0c0c0] pb-0.5 pt-px">
        <Breadth rows={LOSERS} down />
      </div>
      <div className="flex h-2.5 items-start pl-px">
        <h2 className="text-xs leading-[22px]">上证指数</h2>
      </div>
      <IntradayChart />
      <div className="mt-auto grid h-[18px] grid-cols-8 border-t border-[#c0c0c0] leading-4">
        {['笔', '价', '细', '势', '联', '值', '主', '筹'].map((name) => (
          <button
            key={name}
            type="button"
            onClick={() => setTab(name)}
            className={clsx('border-r border-[#c0c0c0] last:border-r-0', tab === name && 'text-[#f00]')}
          >
            {name}
          </button>
        ))}
      </div>
    </aside>
  );
}

/* ---- status bar ---- */

const MARKETS: [string, string, string, string, string][] = [
  ['上证', '2855.52', '1.15', '0.04%', '2168亿'],
  ['深证', '8194.65', '12.73', '0.16%', '3097亿'],
  ['北证', '651.58', '3.19', '0.49%', '25.38亿'],
  ['创业', '1545.31', '-1.59', '-0.10%', '1491亿'],
  ['科创', '682.50', '-3.26', '-0.48%', '292.6亿'],
];

function StatusBar() {
  return (
    <footer className="flex h-5 items-center whitespace-nowrap bg-[#f0f0f0] pt-0.5 leading-none">
      <svg viewBox="0 0 14 14" className="mr-0.5 size-3.5 shrink-0">
        <rect width={14} height={14} rx={1} fill="#e8a010" />
        <rect x={3} y={3} width={8} height={8} fill="#ffd870" stroke="#fff" />
        <rect x={5} y={5} width={5} height={4} fill="#f0a818" />
      </svg>
      {MARKETS.map(([name, value, diff, pct, amount]) => {
        const tone = diff.startsWith('-') ? 'text-[#008000]' : 'text-[#f00]';
        return (
          <div key={name} className="flex w-[220px] shrink-0">
            <span className="w-[26px]">{name}</span>
            <span className={clsx('w-[43px]', tone)}>{value}</span>
            <span className={clsx('w-11 text-right', tone)}>{diff}</span>
            <span className={clsx('w-12 text-right', tone)}>{pct}</span>
            <span className="w-[52px] text-right">{amount}</span>
          </div>
        );
      })}
      <svg viewBox="0 0 110 18" className="h-[18px] w-[110px] shrink-0" shapeRendering="crispEdges">
        <rect x={0} width={1} height={18} fill="#a0a0a0" />
        {[3, 54].map((x, k) => (
          <g key={x}>
            <rect x={x + 0.5} y={1.5} width={49} height={6} fill="#f0f0f0" stroke="#fff" />
            <path d={`M${x + 12.5} 1V8M${x + 37.5} 1V8`} stroke="#fff" />
            <rect x={x + 17} y={1} width={7} height={7} fill="#f00" />
            <rect x={x + 25} y={1} width={6} height={7} fill="green" />
            {[0, 1, 2, 3, 4, 5].map((i) => (
              <g key={i} fill={k ? 'green' : '#f00'}>
                <rect x={x + 3 + i * 8} y={9} width={6} height={2} />
                <rect x={x + 3 + i * 8} y={12} width={6} height={2} />
              </g>
            ))}
          </g>
        ))}
        <rect x={108} width={1} height={18} fill="#a0a0a0" />
      </svg>
      <span className="ml-0.5">高级行情 深圳双线3</span>
      <span className="flex-1" />
      <svg viewBox="0 0 100 14" className="mr-1.5 h-3.5 w-[100px] shrink-0">
        <rect x={2.5} y={1.5} width={14} height={11} rx={1} fill="#e8f0ff" stroke="#3060b0" />
        <path d="M7 7.500H14M7 10.500H14" stroke="#e0b020" strokeWidth={2} />
        <path d="M21.500 1.500H34.500V12.500H21.500Z" fill="#fff" stroke="#808080" />
        <path d="M23 4.500H33M23 6.500H33M23 8.500H33M23 10.500H33" stroke="#a0a0a0" />
        <rect x={40.5} y={0.5} width={11} height={13} rx={3} fill="#e0d020" stroke="#a09800" />
        <path d="M46 11V5M43 7L46 3.500L49 7" fill="none" stroke="#807800" strokeWidth={2} />
        <path d="M62 1H69V7L67 9L61 6ZM60 8L66 10M59 13L62 9L64 13Z" fill="#808080" stroke="#808080" />
        <path d="M81.500 0L85 5H78ZM81.500 4L86 9H77ZM81.500 8L86 12H77ZM81 12H82V14H81Z" fill="#808080" />
        <path d="M93 2H97V6L95.500 8H94.500L93 6ZM94 10H96V12H94Z" fill="#808080" />
      </svg>
    </footer>
  );
}

export default function App() {
  const [paletteOpen, setPaletteOpen] = useState(true);
  return (
    <div className="w-full bg-[#fcfcfc] font-['Liberation_Sans','Noto_Sans_CJK_SC',sans-serif] text-xs text-black">
      <div className="h-0.5 border-b border-[#686868] bg-gray-200" />
      <div className="flex">
        <main className="min-w-0 flex-1">
          <TopBar />
          <div className="relative">
            <div className="flex h-[17px]">
              <div className="flex flex-1 items-center gap-2 pl-px pr-[3px]">
                <h1>上证指数(日线)</h1>
                <Bullet />
                <div className="ml-auto flex items-center gap-[7px]">
                  <svg viewBox="0 0 12 12" className="size-3">
                    <path d="M6 1L11 6L6 11L1 6Z" fill="none" stroke="#808080" />
                  </svg>
                  <PaneIcon />
                </div>
              </div>
              <div className="w-[51px] border-l border-[#c0c0c0]" />
            </div>
            <PriceChart />
            <div className="flex h-[17px] border-t border-[#c0c0c0]">
              <div className="flex flex-1 items-center gap-[5px] pl-px">
                <Bullet />
                <span>VOL-TDX(5,10)</span>
                <span>VVOL: 227351520</span>
                <span className="text-[#0078d7]">VOLUME: 227351520</span>
                <span className="text-[#0078d7]">MA5: 238460320</span>
                <span className="text-[#800080]">MA10: 243910240</span>
              </div>
              <div className="w-[51px] border-l-2 border-t border-[#c0c0c0]" />
            </div>
            <VolumeChart />
            {paletteOpen && <DrawingPalette onClose={() => setPaletteOpen(false)} />}
          </div>
          <div className="flex border-t border-[#c0c0c0]">
            <DateAxis />
            <div className="h-[15px] w-[51px] border-l border-[#c0c0c0] text-center leading-4">日线</div>
          </div>
          <BottomBars />
        </main>
        <QuotePanel />
      </div>
      <div className="h-0.5 border-t border-[#c0c0c0] bg-[#e0e0e0]" />
      <StatusBar />
      <div className="flex h-[3px] bg-[#d8d4cc] pl-[74px]">
        <span className="w-9 bg-[#f8a868]" />
        <span className="ml-28 w-9 bg-gray-100" />
      </div>
    </div>
  );
}
